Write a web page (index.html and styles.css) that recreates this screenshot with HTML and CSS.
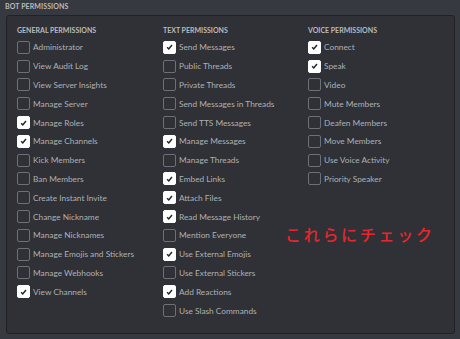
FILE: index.html
```html
<!DOCTYPE html>
<html lang="ja">
<head>
  <meta charset="UTF-8">
  <title>Bot Permissions</title>
  <link rel="stylesheet" href="styles.css">
</head>
<body>
  <div class="section-title">Bot Permissions</div>

  <div class="panel">
    <!-- General -->
    <div class="column">
      <h5>General Permissions</h5>
      <div class="perm"><span class="box"></span>Administrator</div>
      <div class="perm"><span class="box"></span>View Audit Log</div>
      <div class="perm"><span class="box"></span>View Server Insights</div>
      <div class="perm"><span class="box"></span>Manage Server</div>
      <div class="perm"><span class="box checked"><svg viewBox="0 0 12 12"><path d="M3.4 6.3l1.8 1.8 3.5-4.3"/></svg></span>Manage Roles</div>
      <div class="perm"><span class="box checked"><svg viewBox="0 0 12 12"><path d="M3.4 6.3l1.8 1.8 3.5-4.3"/></svg></span>Manage Channels</div>
      <div class="perm"><span class="box"></span>Kick Members</div>
      <div class="perm"><span class="box"></span>Ban Members</div>
      <div class="perm"><span class="box"></span>Create Instant Invite</div>
      <div class="perm"><span class="box"></span>Change Nickname</div>
      <div class="perm"><span class="box"></span>Manage Nicknames</div>
      <div class="perm"><span class="box"></span>Manage Emojis and Stickers</div>
      <div class="perm"><span class="box"></span>Manage Webhooks</div>
      <div class="perm"><span class="box checked"><svg viewBox="0 0 12 12"><path d="M3.4 6.3l1.8 1.8 3.5-4.3"/></svg></span>View Channels</div>
    </div>

    <!-- Text -->
    <div class="column">
      <h5>Text Permissions</h5>
      <div class="perm"><span class="box checked"><svg viewBox="0 0 12 12"><path d="M3.4 6.3l1.8 1.8 3.5-4.3"/></svg></span>Send Messages</div>
      <div class="perm"><span class="box"></span>Public Threads</div>
      <div class="perm"><span class="box"></span>Private Threads</div>
      <div class="perm"><span class="box"></span>Send Messages in Threads</div>
      <div class="perm"><span class="box"></span>Send TTS Messages</div>
      <div class="perm"><span class="box checked"><svg viewBox="0 0 12 12"><path d="M3.4 6.3l1.8 1.8 3.5-4.3"/></svg></span>Manage Messages</div>
      <div class="perm"><span class="box"></span>Manage Threads</div>
      <div class="perm"><span class="box checked"><svg viewBox="0 0 12 12"><path d="M3.4 6.3l1.8 1.8 3.5-4.3"/></svg></span>Embed Links</div>
      <div class="perm"><span class="box checked"><svg viewBox="0 0 12 12"><path d="M3.4 6.3l1.8 1.8 3.5-4.3"/></svg></span>Attach Files</div>
      <div class="perm"><span class="box checked"><svg viewBox="0 0 12 12"><path d="M3.4 6.3l1.8 1.8 3.5-4.3"/></svg></span>Read Message History</div>
      <div class="perm"><span class="box"></span>Mention Everyone</div>
      <div class="perm"><span class="box checked"><svg viewBox="0 0 12 12"><path d="M3.4 6.3l1.8 1.8 3.5-4.3"/></svg></span>Use External Emojis</div>
      <div class="perm"><span class="box"></span>Use External Stickers</div>
      <div class="perm"><span class="box checked"><svg viewBox="0 0 12 12"><path d="M3.4 6.3l1.8 1.8 3.5-4.3"/></svg></span>Add Reactions</div>
      <div class="perm"><span class="box"></span>Use Slash Commands</div>
    </div>

    <!-- Voice -->
    <div class="column">
      <h5>Voice Permissions</h5>
      <div class="perm"><span class="box checked"><svg viewBox="0 0 12 12"><path d="M3.4 6.3l1.8 1.8 3.5-4.3"/></svg></span>Connect</div>
      <div class="perm"><span class="box checked"><svg viewBox="0 0 12 12"><path d="M3.4 6.3l1.8 1.8 3.5-4.3"/></svg></span>Speak</div>
      <div class="perm"><span class="box"></span>Video</div>
      <div class="perm"><span class="box"></span>Mute Members</div>
      <div class="perm"><span class="box"></span>Deafen Members</div>
      <div class="perm"><span class="box"></span>Move Members</div>
      <div class="perm"><span class="box"></span>Use Voice Activity</div>
      <div class="perm"><span class="box"></span>Priority Speaker</div>
    </div>

    <!-- annotation -->
    <div class="note">これらにチェック</div>
  </div>
</body>
</html>
```

FILE: styles.css
```css
* {
  box-sizing: border-box;
}

body {
  margin: 0;
  padding: 0;
  background: #36393f;
  font-family: 'Lato', 'Liberation Sans', sans-serif;
  color: #b9bbbe;
  height: 339px;
  overflow: hidden;
}

.section-title {
  padding: 2px 0 0 5px;
  height: 15px;
  font-size: 7px;
  font-weight: 700;
  text-transform: uppercase;
  letter-spacing: 0.1px;
  color: #b9bbbe;
}

.panel {
  position: relative;
  margin: 0 5px 0 6px;
  height: 319px;
  background: #2f3136;
  border: 1px solid #202225;
  border-radius: 3px;
  padding: 10px 0 0 10px;
  display: grid;
  grid-template-columns: 146px 145px 1fr;
}

h5 {
  margin: 0 0 3px;
  height: 9px;
  line-height: 9px;
  font-size: 7px;
  font-weight: 700;
  text-transform: uppercase;
  color: #b9bbbe;
}

.perm {
  display: flex;
  align-items: center;
  height: 18.8px;
  font-size: 8.3px;
  color: #aeb0b4;
  white-space: nowrap;
}

.box {
  flex: none;
  width: 13px;
  height: 13px;
  margin-right: 3px;
  border: 1px solid #6d7077;
  border-radius: 2px;
  display: flex;
  align-items: center;
  justify-content: center;
}

.box.checked {
  background: #fff;
  border-color: #fff;
}

.box svg {
  width: 12px;
  height: 12px;
  fill: none;
  stroke: #202225;
  stroke-width: 1.6;
}

.note {
  position: absolute;
  left: 278px;
  top: 206px;
  font-family: 'Noto Sans CJK JP', sans-serif;
  font-size: 16px;
  font-weight: 500;
  letter-spacing: 2.7px;
  color: #e8262b;
}
```
